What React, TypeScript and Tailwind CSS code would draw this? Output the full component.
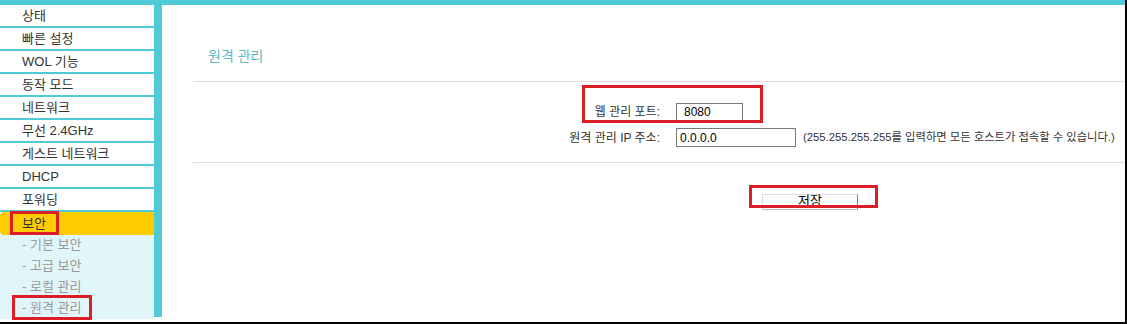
import React from 'react';

const menu = ['상태', '빠른 설정', 'WOL 기능', '동작 모드', '네트워크', '무선 2.4GHz', '게스트 네트워크', 'DHCP', '포워딩'];
const subMenu = ['기본 보안', '고급 보안', '로컬 관리', '원격 관리'];

function App() {
  return (
    <div
      className="relative w-[1127px] h-[324px] overflow-hidden bg-white border-r-2 border-b-2 border-black text-[#333]"
      style={{ fontFamily: '"Liberation Sans", "Noto Sans CJK KR", sans-serif' }}
    >
      <div className="h-[5px] bg-[#4ecbd6]" />
      <div className="flex h-[312px]">
        {/* sidebar */}
        <div className="w-[154px] flex flex-col">
          {menu.map(item => (
            <div
              key={item}
              className="h-[23px] border-b-2 border-[#4ecbd6] pl-[22px] text-[13px] leading-[21px]"
            >
              {item}
            </div>
          ))}
          <div className="h-[23px] bg-[#ffcc00] rounded-l-[4px] pl-[22px] text-[13px] leading-[23px]">보안</div>
          <div className="flex-1 bg-[#e1f6f8]">
            {subMenu.map(item => (
              <div key={item} className="h-[21px] pl-[22px] text-[13px] leading-[19px] text-[#999]">
                - {item}
              </div>
            ))}
          </div>
        </div>
        <div className="w-[8px] bg-[#4ecbd6]" />

        {/* main */}
        <div className="flex-1">
          <div className="pt-[41px] pl-[46px] text-[14px] leading-[20px] text-[#5cb8c9]">원격 관리</div>
          <div className="mt-[15px] ml-[31px] h-px bg-[#dcdcdc]" />

          <div className="mt-[21px] flex items-center text-[12px]">
            <div className="w-[498px] text-right">웹 관리 포트:</div>
            <input
              defaultValue="8080"
              className="ml-[16px] w-[67px] h-[18px] border border-[#777] pl-[7px] text-[12px] text-black outline-none"
            />
          </div>
          <div className="mt-[7px] flex items-center text-[12px]">
            <div className="w-[498px] text-right">원격 관리 IP 주소:</div>
            <input
              defaultValue="0.0.0.0"
              className="ml-[16px] w-[120px] h-[19px] border border-[#777] pl-[3px] text-[12px] text-black outline-none"
            />
            <span className="ml-[7px] text-[11.3px]">(255.255.255.255를 입력하면 모든 호스트가 접속할 수 있습니다.)</span>
          </div>
          <div className="mt-[15px] ml-[31px] h-px bg-[#dcdcdc]" />

          <div className="mt-[25px] pl-[600px]">
            <button className="w-[96px] h-[16px] pb-[3px] bg-white border border-[#ddd] border-r-[#888] border-b-[#bbb] text-[13px] leading-[12px] text-black">
              저장
            </button>
          </div>
        </div>
      </div>

      {/* annotation boxes */}
      <div className="absolute left-[10px] top-[211px] w-[49px] h-[24px] border-[3px] border-[#dc1f26]" />
      <div className="absolute left-[12px] top-[295px] w-[80px] h-[25px] border-[3px] border-[#dc1f26]" />
      <div className="absolute left-[582px] top-[85px] w-[181px] h-[38px] border-[3px] border-[#dc1f26]" />
      <div className="absolute left-[749px] top-[185px] w-[129px] h-[23px] border-[3px] border-[#dc1f26]" />
    </div>
  );
}

export default App;
